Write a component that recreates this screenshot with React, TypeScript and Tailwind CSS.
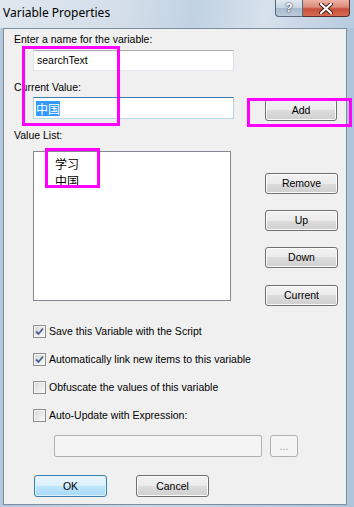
import React from "react";

const font = { fontFamily: '"Liberation Sans", "Noto Sans CJK SC", sans-serif' };

function Btn({ label, className = "", primary = false, disabled = false }: { label: string; className?: string; primary?: boolean; disabled?: boolean }) {
  const base = primary
    ? "border-[#3c7fb1] bg-[linear-gradient(#eaf6fd_0%,#d9f0fc_50%,#bee6fd_50%,#a7d9f5_100%)] shadow-[inset_0_0_0_1px_#dff2fc]"
    : disabled
    ? "border-[#adb2b5] bg-[#f4f4f4] text-[#a0a0a0]"
    : "border-[#707070] bg-[linear-gradient(#f2f2f2_0%,#ebebeb_50%,#dddddd_50%,#cfcfcf_100%)] shadow-[inset_0_0_0_1px_#fbfbfb]";
  return (
    <div className={`flex items-center justify-center rounded-[3px] border text-[10.5px] leading-none text-black ${base} ${className}`}>
      <span className={disabled ? "text-[#9a9a9a]" : ""}>{label}</span>
    </div>
  );
}

function Check({ checked, label }: { checked: boolean; label: string }) {
  return (
    <div className="flex h-[13px] items-center">
      <div className="ml-[29px] flex h-[13px] w-[13px] items-center justify-center border border-[#8e8f8f] bg-white">
        <div className="relative flex h-[11px] w-[11px] items-center justify-center border border-[#f4f4f4] bg-[linear-gradient(135deg,#d8d8d8,#f8f8f8)]">
          {checked && (
            <svg width="9" height="9" viewBox="0 0 9 9" className="absolute left-[0px] top-[0px]">
              <path d="M1 4.5 L3.5 7 L8 1.5" fill="none" stroke="#4b5d93" strokeWidth="1.8" />
            </svg>
          )}
        </div>
      </div>
      <span className="ml-[3px] text-[10.5px] leading-[13px] text-black">{label}</span>
    </div>
  );
}

export default function App() {
  return (
    <div style={font} className="relative flex h-[507px] w-[354px] flex-col overflow-hidden bg-[linear-gradient(90deg,#b4c8dc,#c9d8e7_40%,#bccfe2_70%,#aec4da)]">
      {/* Title bar */}
      <div className="flex h-[28px] shrink-0 items-start justify-between bg-[linear-gradient(100deg,#dfe7ef_0%,#d3dee9_35%,#c1d2e3_55%,#d6e1ec_75%,#b6cbe0_100%)]">
        <div className="ml-[3px] mt-[5px] leading-[16px] text-black" style={{ fontFamily: '"Noto Sans", "Liberation Sans", sans-serif', fontSize: 12 }}>
          Variable Properties
        </div>
        <div className="mr-[4px] flex">
          <div className="flex h-[17px] w-[28px] items-center justify-center rounded-bl-[4px] border border-t-0 border-[#56697f] bg-[linear-gradient(#e2e9f1_0%,#c7d4e1_50%,#a8bbce_51%,#b9cad9_100%)]">
            <span className="text-[12px] font-bold leading-none text-white [text-shadow:0_0_2px_#2a3a4e,0_0_1px_#2a3a4e]">?</span>
          </div>
          <div className="flex h-[17px] w-[47px] items-center justify-center rounded-br-[4px] border border-l-0 border-t-0 border-[#5a2f2a] bg-[linear-gradient(#ecb3a6_0%,#dd8a78_45%,#c7503b_55%,#d56c52_100%)]">
            <svg width="14" height="11" viewBox="0 0 14 11">
              <path d="M2 1 L12 10 M12 1 L2 10" stroke="#3a1a16" strokeWidth="4" strokeLinecap="round" />
              <path d="M2 1 L12 10 M12 1 L2 10" stroke="#ffffff" strokeWidth="2.2" strokeLinecap="round" />
            </svg>
          </div>
        </div>
      </div>

      {/* Client area */}
      <div className="ml-[3px] mr-[7px] mb-[2px] flex flex-1 flex-col border border-[#7d8d9d] bg-[#f0f0f0]">
        <div className="ml-[10px] mt-[4px] h-[13px] text-[10.5px] leading-[13px] text-black">Enter a name for the variable:</div>
        <div className="ml-[29px] mt-[4px] flex h-[21px] w-[201px] items-center border border-[#abadb3] border-b-[#e3e9ef] border-l-[#e2e3ea] border-r-[#dbdfe6] bg-white pl-[3px] text-[10.5px] text-black">
          searchText
        </div>
        <div className="ml-[10px] mt-[10px] h-[13px] text-[10.5px] leading-[13px] text-black">Current Value:</div>
        <div className="mt-[3px] flex h-[23px] items-start">
          <div className="ml-[29px] flex h-[22px] w-[201px] items-center border border-[#3d7bad] border-b-[#b7d9ed] border-l-[#b5cfe7] border-r-[#b5cfe7] bg-white pl-[2px]">
            <span className="bg-[#3399ff] text-[12px] leading-[15px] text-white" style={{ fontFamily: '"Noto Sans CJK SC", sans-serif' }}>中国</span>
          </div>
          <Btn label="Add" className="ml-[31px] mt-[2px] h-[22px] w-[72px]" />
        </div>
        <div className="ml-[10px] mt-[9px] h-[13px] text-[10.5px] leading-[13px] text-black">Value List:</div>
        <div className="mt-[9px] flex items-start">
          <div className="ml-[29px] h-[150px] w-[198px] border border-[#828790] bg-white pl-[21px] pt-[3px] text-[12px] leading-[17px] text-black" style={{ fontFamily: '"Noto Sans CJK SC", sans-serif' }}>
            <div>学习</div>
            <div>中国</div>
          </div>
          <div className="ml-[34px] flex flex-col pt-[22px]">
            <Btn label="Remove" className="h-[21px] w-[73px]" />
            <Btn label="Up" className="mt-[16px] h-[21px] w-[73px]" />
            <Btn label="Down" className="mt-[16px] h-[21px] w-[73px]" />
            <Btn label="Current" className="mt-[17px] h-[21px] w-[73px]" />
          </div>
        </div>
        <div className="mt-[19px] flex flex-col gap-[15px]">
          <Check checked label="Save this Variable with the Script" />
          <Check checked label="Automatically link new items to this variable" />
          <Check checked={false} label="Obfuscate the values of this variable" />
          <Check checked={false} label="Auto-Update with Expression:" />
        </div>
        <div className="mt-[13px] flex">
          <div className="ml-[50px] h-[22px] w-[208px] rounded-[2px] border border-[#adb2b5] bg-[#f4f4f4]" />
          <Btn label="..." disabled className="ml-[8px] h-[22px] w-[28px]" />
        </div>
        <div className="mt-[18px] flex">
          <Btn label="OK" primary className="ml-[30px] h-[22px] w-[73px]" />
          <Btn label="Cancel" className="ml-[29px] h-[22px] w-[73px]" />
        </div>
      </div>

      {/* Annotation overlays */}
      <div className="pointer-events-none absolute left-[22px] top-[46px] h-[80px] w-[98px] border-[3px] border-[#ff00ff]" />
      <div className="pointer-events-none absolute left-[247px] top-[98px] h-[29px] w-[105px] border-[3px] border-[#ff00ff]" />
      <div className="pointer-events-none absolute left-[45px] top-[148px] h-[40px] w-[55px] border-[3px] border-[#ff00ff]" />
    </div>
  );
}
